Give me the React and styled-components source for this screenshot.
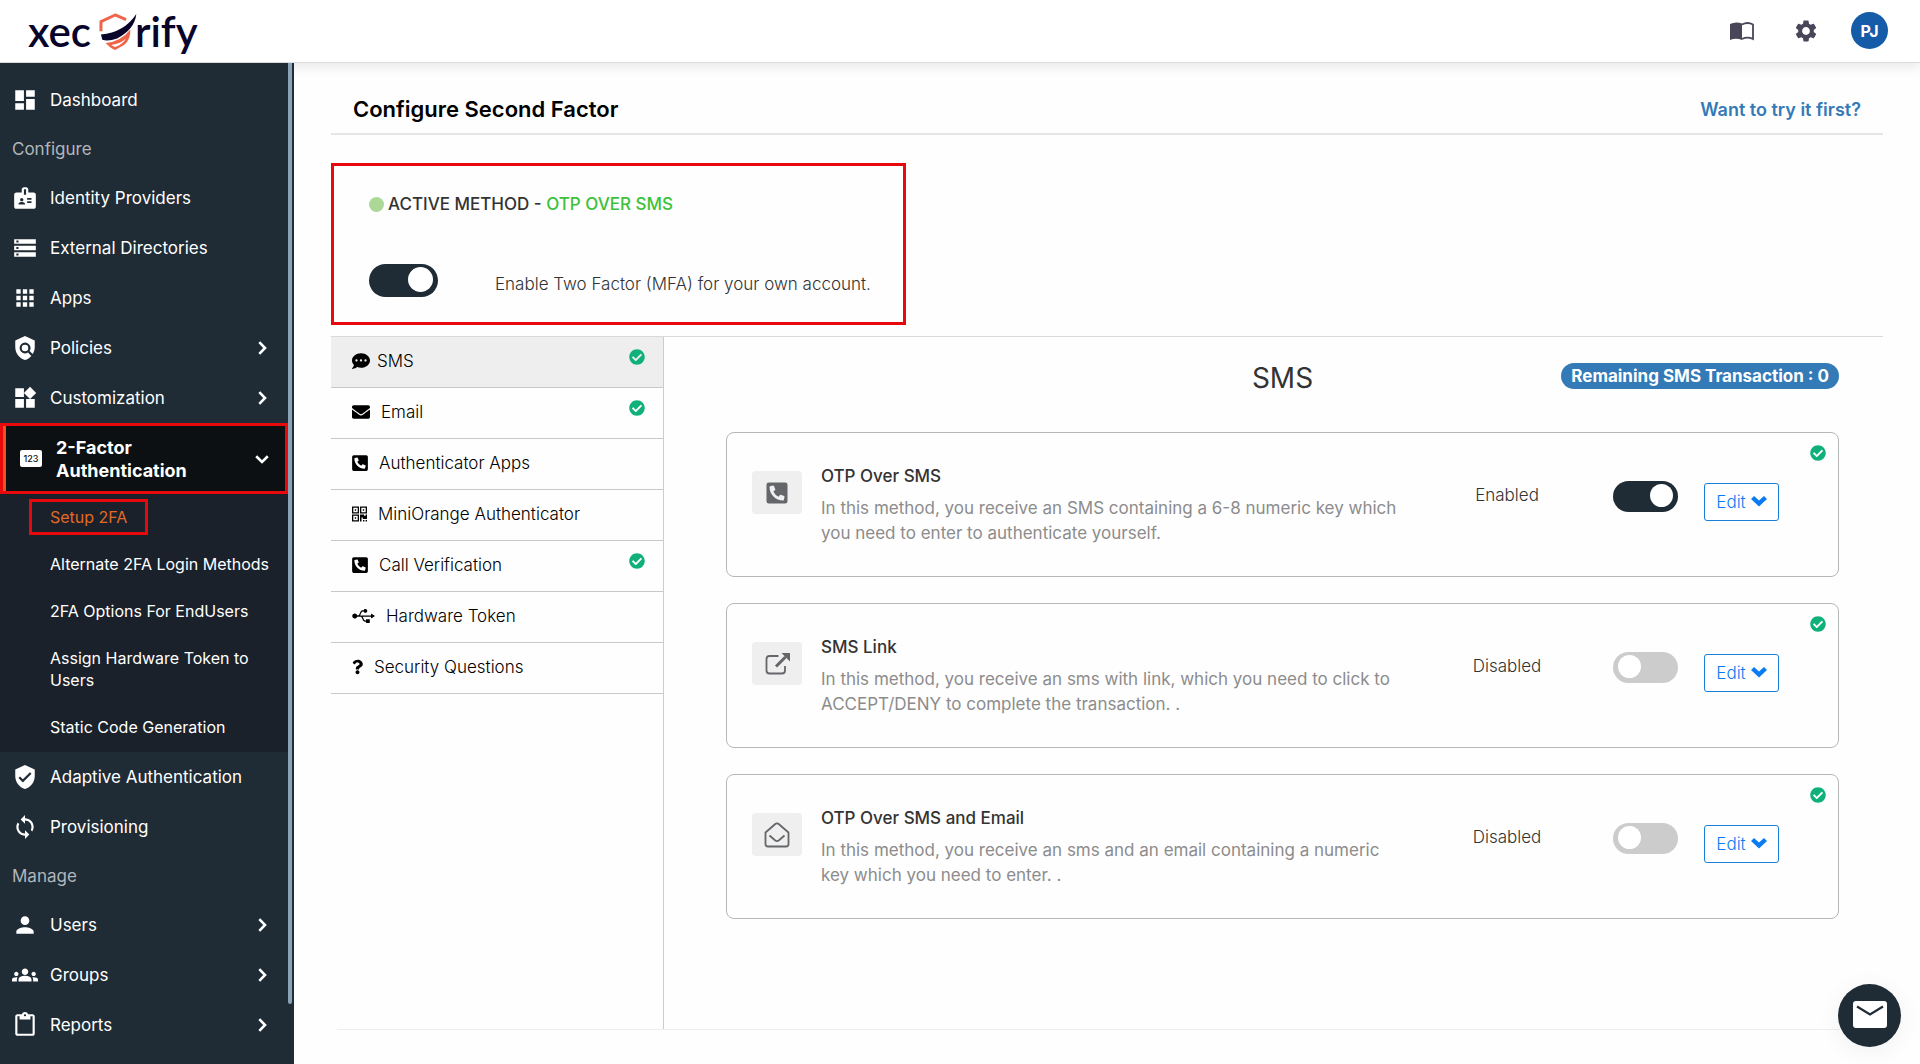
import React from "react";
import styled, { createGlobalStyle, css } from "styled-components";
import {
  MdDashboard,
  MdBadge,
  MdStorage,
  MdApps,
  MdPolicy,
  MdWidgets,
  MdVerifiedUser,
  MdSync,
  MdPerson,
  MdGroups,
  MdContentPaste,
  MdSettings,
} from "react-icons/md";
import {
  FaCommentDots,
  FaEnvelope,
  FaPhoneSquareAlt,
  FaUsb,
  FaQuestion,
  FaCheckCircle,
} from "react-icons/fa";

const GlobalStyle = createGlobalStyle`
  * {
    box-sizing: border-box;
  }
  body {
    margin: 0;
    background: #fefefe;
    color: #333;
    font-family: Inter, sans-serif;
    font-size: 17px;
    line-height: 25px;
  }
  a {
    color: inherit;
    text-decoration: none;
  }
  h1, h2, h3, p {
    margin: 0;
  }
  svg {
    display: block;
    flex-shrink: 0;
  }
`;

const Page = styled.div`
  display: flex;
  flex-direction: column;
  min-height: 100vh;
`;

/* ---------- header ---------- */

const Header = styled.header`
  display: flex;
  justify-content: space-between;
  height: 63px;
  padding: 0 32px 0 28px;
  background: white;
  border-bottom: 1px solid #dcdcdc;
  box-shadow: 0 3px 12px rgba(0, 0, 0, 0.1);
  position: relative;
  z-index: 1;
`;

const Logo = styled.a`
  display: flex;
  align-items: center;
  color: #08042a;
  font-family: Lato, sans-serif;
  font-size: 42px;
  font-weight: 600;
  line-height: 58px;

  svg {
    margin: 0 -2px 0 7px;
  }
`;

const HeaderTools = styled.div`
  display: flex;
  align-items: center;
  gap: 27px;
  padding-bottom: 1px;
`;

const IconButton = styled.button`
  display: flex;
  align-items: center;
  justify-content: center;
  width: 37px;
  height: 37px;
  padding: 0;
  border: none;
  background: none;
  color: #4a465a;
`;

const Avatar = styled.button`
  width: 37px;
  height: 37px;
  padding: 0;
  border: none;
  border-radius: 50%;
  background: #145ba8;
  color: white;
  font-family: inherit;
  font-size: 16px;
  font-weight: 700;
`;

/* ---------- sidebar ---------- */

const Body = styled.div`
  display: flex;
  flex: 1;
`;

const Sidebar = styled.aside`
  display: flex;
  flex-shrink: 0;
  width: 294px;
  background: #1f2b35;
  color: white;
  position: relative;
  z-index: 2;
`;

const Nav = styled.nav`
  width: 288px;
  padding-top: 12px;
`;

const ScrollThumb = styled.div`
  width: 4px;
  height: 94%;
  border-radius: 0 0 2px 2px;
  background: #8ba2b5;
`;

const NavLabel = styled.div`
  padding: 0 12px;
  line-height: 48px;
  color: #b2b6ba;
`;

const NavLink = styled.a`
  display: flex;
  align-items: center;
  gap: 12px;
  height: 50px;
  padding: 0 18px 0 12px;

  ${(p) =>
    p.$open &&
    css`
      height: 71px;
      padding: 0 15px;
      border: 3px solid #e8090c;
      background: #0c1012;
      box-shadow: inset 3px 0 #f4501e;
      font-size: 18px;
      font-weight: 700;
      line-height: 23px;
    `}
`;

const NavText = styled.span`
  flex: 1;
`;

const PinIcon = styled.span`
  width: 22px;
  height: 17px;
  margin: 0 2px;
  border-radius: 2px;
  background: white;
  color: #0c1012;
  font-size: 9px;
  font-weight: 500;
  line-height: 17px;
  text-align: center;
`;

const SubMenu = styled.div`
  padding-bottom: 1px;
  background: #1a212a;
`;

const SubLink = styled.a`
  display: block;
  padding: 12px 12px 13px 50px;
  color: ${(p) => (p.$active ? "#e06a26" : "white")};
  font-size: 16px;
  line-height: 22px;
`;

const SubText = styled.span`
  position: relative;

  ${(p) =>
    p.$marked &&
    css`
      &::after {
        content: "";
        position: absolute;
        inset: -8px -21px;
        border: 3px solid #e8090c;
      }
    `}
`;

/* ---------- content ---------- */

const Main = styled.main`
  display: flex;
  flex: 1;
  flex-direction: column;
  min-width: 0;
  padding: 0 37px 34px;
`;

const TitleBar = styled.div`
  display: flex;
  align-items: center;
  justify-content: space-between;
  padding: 22px 22px 0;
  border-bottom: 2px solid #e5e5e5;
`;

const Title = styled.h1`
  color: black;
  font-size: 22px;
  font-weight: 600;
  line-height: 48px;
`;

const TryLink = styled.a`
  color: #337ab7;
  font-size: 18px;
  font-weight: 600;
`;

const ActivePanel = styled.section`
  width: 575px;
  max-width: 100%;
  margin: 28px 0 11px;
  padding: 26px 30px 25px 35px;
  border: 3px solid #e8090c;
`;

const ActiveMethod = styled.h2`
  display: flex;
  align-items: center;
  gap: 4px;
  font-size: 17px;
  font-weight: 500;
  line-height: 25px;
`;

const Dot = styled.span`
  width: 15px;
  height: 15px;
  border-radius: 50%;
  background: #abd897;
`;

const MethodName = styled.span`
  color: #3cc13b;
`;

const MfaRow = styled.div`
  display: flex;
  align-items: flex-end;
  gap: 57px;
  margin-top: 47px;
  font-weight: 300;
`;

const Switch = styled.input`
  appearance: none;
  flex-shrink: 0;
  width: ${(p) => (p.$large ? 69 : 65)}px;
  height: ${(p) => (p.$large ? 33 : 31)}px;
  margin: 0;
  padding: 3px 5px;
  border-radius: 17px;
  background: #ccc;
  display: flex;

  &::before {
    content: "";
    width: ${(p) => (p.$large ? 25 : 23)}px;
    height: ${(p) => (p.$large ? 25 : 23)}px;
    border-radius: 50%;
    background: white;
  }

  &:checked {
    justify-content: flex-end;
    background: #1f2b35;
  }
`;

const Methods = styled.section`
  display: grid;
  grid-template-columns: 333px minmax(0, 1fr);
  flex: 1;
  border-top: 1px solid #d9d9d9;
`;

const MethodTabs = styled.div`
  border-right: 1px solid #ccc;
`;

const MethodTab = styled.button`
  display: flex;
  align-items: center;
  gap: ${(p) => (p.$tight ? 7 : 11)}px;
  width: 100%;
  height: 51px;
  padding: 0 18px 3px 21px;
  border: none;
  border-bottom: 1px solid #c8c8c8;
  background: ${(p) => (p.$active ? "#eee" : "transparent")};
  color: black;
  font-family: inherit;
  font-size: 17px;
  font-weight: 300;
  text-align: left;
`;

const TabIcon = styled.span`
  svg {
    width: ${(p) => p.$width}px;
    height: 18px;
  }
`;

const TabText = styled.span`
  flex: 1;
`;

const Check = styled(FaCheckCircle)`
  margin-bottom: 8px;
  color: #10b07a;
`;

const Detail = styled.div`
  padding: 24px 44px 0 62px;
`;

const DetailHead = styled.div`
  display: grid;
  grid-template-columns: 1fr auto 1fr;
  margin-bottom: 37px;
`;

const DetailTitle = styled.h2`
  grid-column: 2;
  font-size: 28px;
  font-weight: 400;
  line-height: 34px;
`;

const Badge = styled.span`
  justify-self: end;
  align-self: start;
  margin-top: 2px;
  padding: 0 10px;
  border-radius: 13px;
  background: #337ab7;
  color: white;
  font-weight: 700;
  line-height: 26px;
`;

const CardList = styled.div`
  display: grid;
  gap: 26px;
`;

const Card = styled.article`
  position: relative;
  display: grid;
  grid-template-columns: 50px minmax(0, 580px) minmax(90px, 1fr) 65px 101px;
  align-items: start;
  padding: 31px 59px 30px 25px;
  border: 1px solid #b5b7b9;
  border-radius: 8px;
`;

const CardIcon = styled.div`
  display: flex;
  align-items: center;
  justify-content: center;
  height: 43px;
  margin-top: 7px;
  border-radius: 4px;
  background: #efefef;
  color: #65666a;
`;

const CardText = styled.div`
  margin-left: 19px;
  margin-right: -19px;
`;

const CardTitle = styled.h3`
  margin-bottom: 7px;
  font-size: 17px;
  font-weight: 500;
  line-height: 25px;
`;

const CardCopy = styled.p`
  color: #8c8c8c;
`;

const Status = styled.label`
  margin: 19px 0 0 19px;
  font-weight: 300;
  text-align: center;
`;

const CardSwitch = styled(Switch)`
  margin-top: 17px;
`;

const EditButton = styled.button`
  display: flex;
  align-items: center;
  justify-content: center;
  gap: 5px;
  height: 38px;
  margin: 19px 0 0 26px;
  padding: 0;
  border: 1px solid #1a7fd8;
  border-radius: 3px;
  background: white;
  color: #0a7bf2;
  font-family: inherit;
  font-size: 17px;
  font-weight: 300;
`;

const CardCheck = styled(FaCheckCircle)`
  position: absolute;
  top: 12px;
  right: 12px;
  color: #10b07a;
`;

const BottomRule = styled.div`
  margin-left: 6px;
  border-top: 1px solid #eee;
`;

const MailButton = styled.button`
  position: fixed;
  right: 19px;
  bottom: 17px;
  display: flex;
  align-items: center;
  justify-content: center;
  width: 63px;
  height: 63px;
  padding: 0 0 3px;
  border: none;
  border-radius: 50%;
  background: #1f2b35;
  box-shadow: 0 4px 24px rgba(0, 0, 0, 0.06);
`;

/* ---------- icons ---------- */

const ShieldMark = () => (
  <svg width="39" height="37" viewBox="295 37 116 112">
    <path d="M303 92V63l43-20 33 14" fill="none" stroke="#ee6549" strokeWidth="9" strokeLinejoin="round" />
    <path d="M303 102q70-6 107-62-5 46-58 74-27 10-45 4z" fill="#08042a" />
    <path d="M317 128q46-4 75-41 1 30-18 46l-28 16q-14-5-29-21z" fill="#ee6549" />
    <path d="M334 134q30-5 44-20-7 17-33 26z" fill="white" />
  </svg>
);

const BookIcon = () => (
  <svg width="24" height="20" viewBox="0 0 24 20" fill="currentColor">
    <path d="M0 3Q6 0 12 2.6V19Q6 16.500 0 19z" />
    <path d="M12 3.500q5.500-3 11 0V18q-5.500-2.600-11 0" fill="none" stroke="currentColor" strokeWidth="1.800" />
  </svg>
);

const Chevron = ({ down }) => (
  <svg width="16" height="16" viewBox="0 0 16 16" fill="none" stroke="white" strokeWidth="2.600">
    {down ? <path d="M2.200 5.300 8 11l5.800-5.700" /> : <path d="M5.300 2.200 11 8l-5.700 5.800" />}
  </svg>
);

const QrIcon = () => (
  <svg viewBox="0 0 15 15" fill="currentColor">
    <path
      fillRule="evenodd"
      d="M0 0h7v7H0zM1.300 1.300v4.400h4.400V1.300zM8 0h7v7H8zM9.300 1.300v4.400h4.400V1.300zM0 8h7v7H0zM1.300 9.300v4.400h4.400V9.300z"
    />
    <path d="M2.800 2.800h1.400v1.400H2.800zM10.800 2.800h1.400v1.400h-1.400zM2.800 10.800h1.400v1.400H2.800zM8 8h4v1.300h1.600V8H15v4.500h-4.200v-1.400H9.500V15H8zM11 13.600h1.400V15H11zM13.600 13.600H15V15h-1.400z" />
  </svg>
);

const EditArrow = () => (
  <svg width="16" height="14" viewBox="0 0 16 14" fill="currentColor">
    <path d="M0 4 3 1l5 4.500L13 1l3 3-8 7.500z" />
  </svg>
);

const LinkIcon = () => (
  <svg width="25" height="25" viewBox="0 0 25 25" fill="none" stroke="currentColor" strokeWidth="1.800">
    <path d="M13.500 5H4.500Q1.500 5 1.500 8v11.500q0 3 3 3H17q3 0 3-3V15" />
    <path d="M11 15.500 20.500 6" strokeWidth="3" />
    <path d="M16.500 2H25v8.500z" fill="currentColor" stroke="none" />
  </svg>
);

const OpenMailIcon = () => (
  <svg width="26" height="26" viewBox="0 0 26 26" fill="none" stroke="currentColor" strokeWidth="1.800" strokeLinejoin="round">
    <path d="M1.500 10.500 11 2.200q2-1.700 4 0l9.500 8.300V22q0 2.500-2.500 2.500H4Q1.500 24.500 1.500 22z" />
    <path d="M5.500 13.500l5.500 4.800q2 1.500 4 0l5.500-4.800" />
  </svg>
);

const MailIcon = () => (
  <svg width="34" height="27" viewBox="0 0 34 27">
    <rect width="34" height="27" rx="3" fill="white" />
    <path d="M4 5.500 17 13.500 30 5.500" fill="none" stroke="#1f2b35" strokeWidth="2.200" />
  </svg>
);

/* ---------- data ---------- */

const configureTop = [
  { text: "Identity Providers", icon: MdBadge },
  { text: "External Directories", icon: MdStorage },
  { text: "Apps", icon: MdApps },
  { text: "Policies", icon: MdPolicy, arrow: true },
  { text: "Customization", icon: MdWidgets, arrow: true },
];

const subLinks = [
  "Setup 2FA",
  "Alternate 2FA Login Methods",
  "2FA Options For EndUsers",
  "Assign Hardware Token to Users",
  "Static Code Generation",
];

const configureBottom = [
  { text: "Adaptive Authentication", icon: MdVerifiedUser },
  { text: "Provisioning", icon: MdSync },
];

const manage = [
  { text: "Users", icon: MdPerson, arrow: true },
  { text: "Groups", icon: MdGroups, arrow: true },
  { text: "Reports", icon: MdContentPaste, arrow: true },
];

const tabs = [
  { text: "SMS", icon: FaCommentDots, width: 18, tight: true, done: true },
  { text: "Email", icon: FaEnvelope, width: 18, done: true },
  { text: "Authenticator Apps", icon: FaPhoneSquareAlt, width: 16 },
  { text: "MiniOrange Authenticator", icon: QrIcon, width: 15 },
  { text: "Call Verification", icon: FaPhoneSquareAlt, width: 16, done: true },
  { text: "Hardware Token", icon: FaUsb, width: 23 },
  { text: "Security Questions", icon: FaQuestion, width: 11 },
];

const cards = [
  {
    id: "otp-sms",
    title: "OTP Over SMS",
    copy: "In this method, you receive an SMS containing a 6-8 numeric key which you need to enter to authenticate yourself.",
    icon: <FaPhoneSquareAlt size={24} />,
    enabled: true,
  },
  {
    id: "sms-link",
    title: "SMS Link",
    copy: "In this method, you receive an sms with link, which you need to click to ACCEPT/DENY to complete the transaction. .",
    icon: <LinkIcon />,
  },
  {
    id: "otp-sms-email",
    title: "OTP Over SMS and Email",
    copy: "In this method, you receive an sms and an email containing a numeric key which you need to enter. .",
    icon: <OpenMailIcon />,
  },
];

function NavItem({ text, icon: Icon, arrow }) {
  return (
    <NavLink href="#">
      <Icon size={26} />
      <NavText>{text}</NavText>
      {arrow && <Chevron />}
    </NavLink>
  );
}

function App() {
  return (
    <Page>
      <GlobalStyle />
      <Header>
        <Logo href="#">
          <span>xec</span>
          <ShieldMark />
          <span>rify</span>
        </Logo>
        <HeaderTools>
          <IconButton aria-label="Documentation">
            <BookIcon />
          </IconButton>
          <IconButton aria-label="Settings">
            <MdSettings size={26} />
          </IconButton>
          <Avatar>PJ</Avatar>
        </HeaderTools>
      </Header>
      <Body>
        <Sidebar>
          <Nav>
            <NavItem text="Dashboard" icon={MdDashboard} />
            <NavLabel>Configure</NavLabel>
            {configureTop.map((item) => (
              <NavItem key={item.text} {...item} />
            ))}
            <NavLink href="#" $open>
              <PinIcon>123</PinIcon>
              <NavText>
                2-Factor
                <br />
                Authentication
              </NavText>
              <Chevron down />
            </NavLink>
            <SubMenu>
              {subLinks.map((text, i) => (
                <SubLink key={text} href="#" $active={i === 0}>
                  <SubText $marked={i === 0}>{text}</SubText>
                </SubLink>
              ))}
            </SubMenu>
            {configureBottom.map((item) => (
              <NavItem key={item.text} {...item} />
            ))}
            <NavLabel>Manage</NavLabel>
            {manage.map((item) => (
              <NavItem key={item.text} {...item} />
            ))}
          </Nav>
          <ScrollThumb />
        </Sidebar>
        <Main>
          <TitleBar>
            <Title>Configure Second Factor</Title>
            <TryLink href="#">Want to try it first?</TryLink>
          </TitleBar>
          <ActivePanel>
            <ActiveMethod>
              <Dot />
              <span>
                ACTIVE METHOD - <MethodName>OTP OVER SMS</MethodName>
              </span>
            </ActiveMethod>
            <MfaRow>
              <Switch type="checkbox" id="mfa" $large defaultChecked />
              <label htmlFor="mfa">Enable Two Factor (MFA) for your own account.</label>
            </MfaRow>
          </ActivePanel>
          <Methods>
            <MethodTabs>
              {tabs.map(({ text, icon: Icon, width, tight, done }, i) => (
                <MethodTab key={text} $active={i === 0} $tight={tight}>
                  <TabIcon $width={width}>
                    <Icon />
                  </TabIcon>
                  <TabText>{text}</TabText>
                  {done && <Check size={16} />}
                </MethodTab>
              ))}
            </MethodTabs>
            <Detail>
              <DetailHead>
                <DetailTitle>SMS</DetailTitle>
                <Badge>Remaining SMS Transaction : 0</Badge>
              </DetailHead>
              <CardList>
                {cards.map(({ id, title, copy, icon, enabled }) => (
                  <Card key={id}>
                    <CardIcon>{icon}</CardIcon>
                    <CardText>
                      <CardTitle>{title}</CardTitle>
                      <CardCopy>{copy}</CardCopy>
                    </CardText>
                    <Status htmlFor={id}>{enabled ? "Enabled" : "Disabled"}</Status>
                    <CardSwitch type="checkbox" id={id} defaultChecked={enabled} />
                    <EditButton>
                      Edit <EditArrow />
                    </EditButton>
                    <CardCheck size={16} />
                  </Card>
                ))}
              </CardList>
            </Detail>
          </Methods>
          <BottomRule />
        </Main>
      </Body>
      <MailButton aria-label="Contact support">
        <MailIcon />
      </MailButton>
    </Page>
  );
}

export default App;
